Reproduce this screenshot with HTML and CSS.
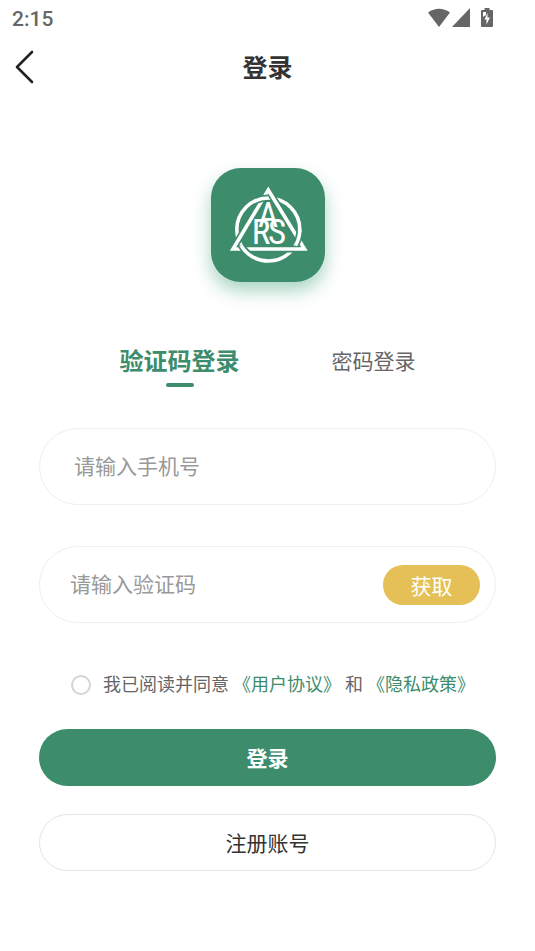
FILE: index.html
```html
<!DOCTYPE html>
<html lang="zh-CN">
<head>
  <meta charset="UTF-8" />
  <title>登录</title>
  <meta name="viewport" content="width=device-width, initial-scale=1" />
  <link rel="stylesheet" href="styles.css">
</head>
<body>
  <div class="status-bar">
    <span class="time">2:15</span>
    <div class="status-icons">
      <svg width="24" height="20" viewBox="0 0 24 20"><path d="M1 4.5Q12-3 23 4.5L12 19Z" fill="#666" /></svg>
      <svg width="18" height="20" viewBox="0 0 18 20"><path d="M18 0V19H0Z" fill="#666" /></svg>
      <svg class="battery" width="12" height="20" viewBox="0 0 12 20">
        <path d="M3.5 0H8.5V2H11Q12 2 12 3V18Q12 19 11 19H1Q0 19 0 18V3Q0 2 1 2H3.5Z" fill="#666" />
        <path d="M2 4H5V7L2 9ZM6.5 5L3.5 11.5H5.5V16.5L9 9.5H6.5Z" fill="#fff" />
      </svg>
    </div>
  </div>

  <header class="nav-bar">
    <button type="button" class="back" aria-label="返回">
      <svg width="20" height="34" viewBox="0 0 20 34"><path d="M17 2L2 17L17 32" fill="none" stroke="#222" stroke-width="2.6" stroke-linecap="round" stroke-linejoin="round" /></svg>
    </button>
    <h1>登录</h1>
  </header>

  <main class="container">
    <div class="logo">
      <svg width="114" height="114" viewBox="0 0 114 114" role="img" aria-label="ARS">
        <!-- ring and triangle, woven over and under each other -->
        <g fill="none" stroke="#fff" stroke-width="3.6">
          <circle cx="57.3" cy="61.5" r="31.5" />
          <path class="logo-gap" d="M57.3 22L22 81H93.5Z" />
          <path d="M57.3 22L22 81H93.5Z" />
          <g class="logo-gap">
            <path d="M45.5 32.3A31.5 31.5 0 0 1 56.7 30" />
            <path d="M88.7 64.2A31.5 31.5 0 0 1 84.9 76.8" />
            <path d="M40.6 88.2A31.5 31.5 0 0 1 30 77.3" />
          </g>
          <path d="M43.5 33.2A31.5 31.5 0 0 1 57.3 30" />
          <path d="M88.8 61.5A31.5 31.5 0 0 1 84.6 77.3" />
          <path d="M41.5 88.8A31.5 31.5 0 0 1 30 77.3" />
        </g>
        <g class="logo-text" fill="#fff" text-anchor="middle">
          <text x="57" y="59">A</text>
          <text x="50" y="76">R</text>
          <text x="66" y="76">S</text>
        </g>
      </svg>
    </div>

    <nav class="tabs">
      <button type="button" class="tab active">验证码登录</button>
      <button type="button" class="tab">密码登录</button>
    </nav>

    <form class="login-form">
      <div class="field phone">
        <input type="tel" aria-label="手机号" placeholder="请输入手机号" />
      </div>
      <div class="field code">
        <input type="text" aria-label="验证码" placeholder="请输入验证码" />
        <button type="button" class="get-code">获取</button>
      </div>
      <div class="agreement">
        <input type="checkbox" id="agree" />
        <label for="agree">我已阅读并同意</label>
        <a href="#">《用户协议》</a>
        <span>和</span>
        <a href="#">《隐私政策》</a>
      </div>
      <button type="submit" class="btn btn-primary">登录</button>
      <button type="button" class="btn btn-outline">注册账号</button>
    </form>
  </main>
</body>
</html>
```
FILE: styles.css
```css
* {
  box-sizing: border-box;
}
body {
  margin: 0;
  background: #fff;
  color: #333;
  font-family: Roboto, "Noto Sans CJK SC", sans-serif;
}
button,
input {
  font-family: inherit;
  margin: 0;
}
button {
  border: none;
  padding: 0;
  background: none;
  color: inherit;
}
svg {
  display: block;
}
.status-bar {
  display: flex;
  justify-content: space-between;
  align-items: center;
  height: 36px;
  padding: 0 42px 0 12px;
  color: #666;
}
.time {
  padding-top: 2px;
  font-size: 21px;
  font-weight: 500;
}
.status-icons {
  display: flex;
  gap: 1px;
}
.battery {
  margin-left: 10px;
}
.nav-bar {
  display: grid;
  grid-template-columns: 40px 1fr 40px;
  align-items: center;
  height: 62px;
  padding: 0 15px;
}
.nav-bar h1 {
  margin: 0;
  padding-top: 4px;
  font-size: 25px;
  line-height: 36px;
  text-align: center;
}
.container {
  padding: 70px 39px 40px;
}
.logo {
  width: 114px;
  margin: 0 auto;
  border-radius: 30px;
  background: #3d8c6c;
  box-shadow: 0 9px 18px rgba(61, 160, 120, 0.45);
}
.logo-gap {
  stroke: #3d8c6c;
  stroke-width: 7;
}
.logo-text {
  font-family: "Liberation Sans Narrow", "Roboto Condensed", Roboto, sans-serif;
  font-size: 35px;
}
.tabs {
  display: flex;
  justify-content: center;
  gap: 92px;
  margin-top: 60px;
}
.tab {
  display: flex;
  flex-direction: column;
  align-items: center;
  height: 46px;
  font-size: 21px;
  line-height: 40px;
  color: #666;
}
.tab.active {
  font-size: 24px;
  font-weight: bold;
  color: #3d8c6c;
}
.tab.active::after {
  content: "";
  width: 28px;
  height: 4px;
  margin-top: 1px;
  border-radius: 2px;
  background: #3d8c6c;
}
.login-form {
  margin-top: 40px;
}
.field {
  display: flex;
  align-items: center;
  height: 77px;
  margin-bottom: 41px;
  border: 1px solid #eee;
  border-radius: 39px;
}
.phone {
  padding: 0 34px;
}
.code {
  padding: 0 15px 0 30px;
}
.field input {
  flex: 1;
  min-width: 0;
  height: 40px;
  padding: 0;
  border: none;
  outline: none;
  background: none;
  font-size: 21px;
}
.field input::placeholder {
  color: #999;
}
.get-code {
  width: 97px;
  height: 40px;
  border-radius: 20px;
  background: #e4c056;
  color: #fff;
  font-size: 21px;
}
.agreement {
  display: flex;
  align-items: center;
  gap: 4px;
  margin: 48px 0 30px;
  padding-left: 32px;
  color: #666;
  font-size: 18px;
  line-height: 28px;
}
.agreement input {
  appearance: none;
  width: 20px;
  height: 20px;
  margin-right: 8px;
  border: 2px solid #d4d4d4;
  border-radius: 50%;
}
.agreement a {
  color: #3d8c6c;
  text-decoration: none;
}
.btn {
  display: block;
  width: 100%;
  height: 57px;
  padding-bottom: 2px;
  border-radius: 29px;
  font-size: 21px;
}
.btn-primary {
  margin-bottom: 28px;
  background: #3d8c6c;
  color: #fff;
  font-weight: bold;
}
.btn-outline {
  border: 1px solid #e4e4e4;
}
```
